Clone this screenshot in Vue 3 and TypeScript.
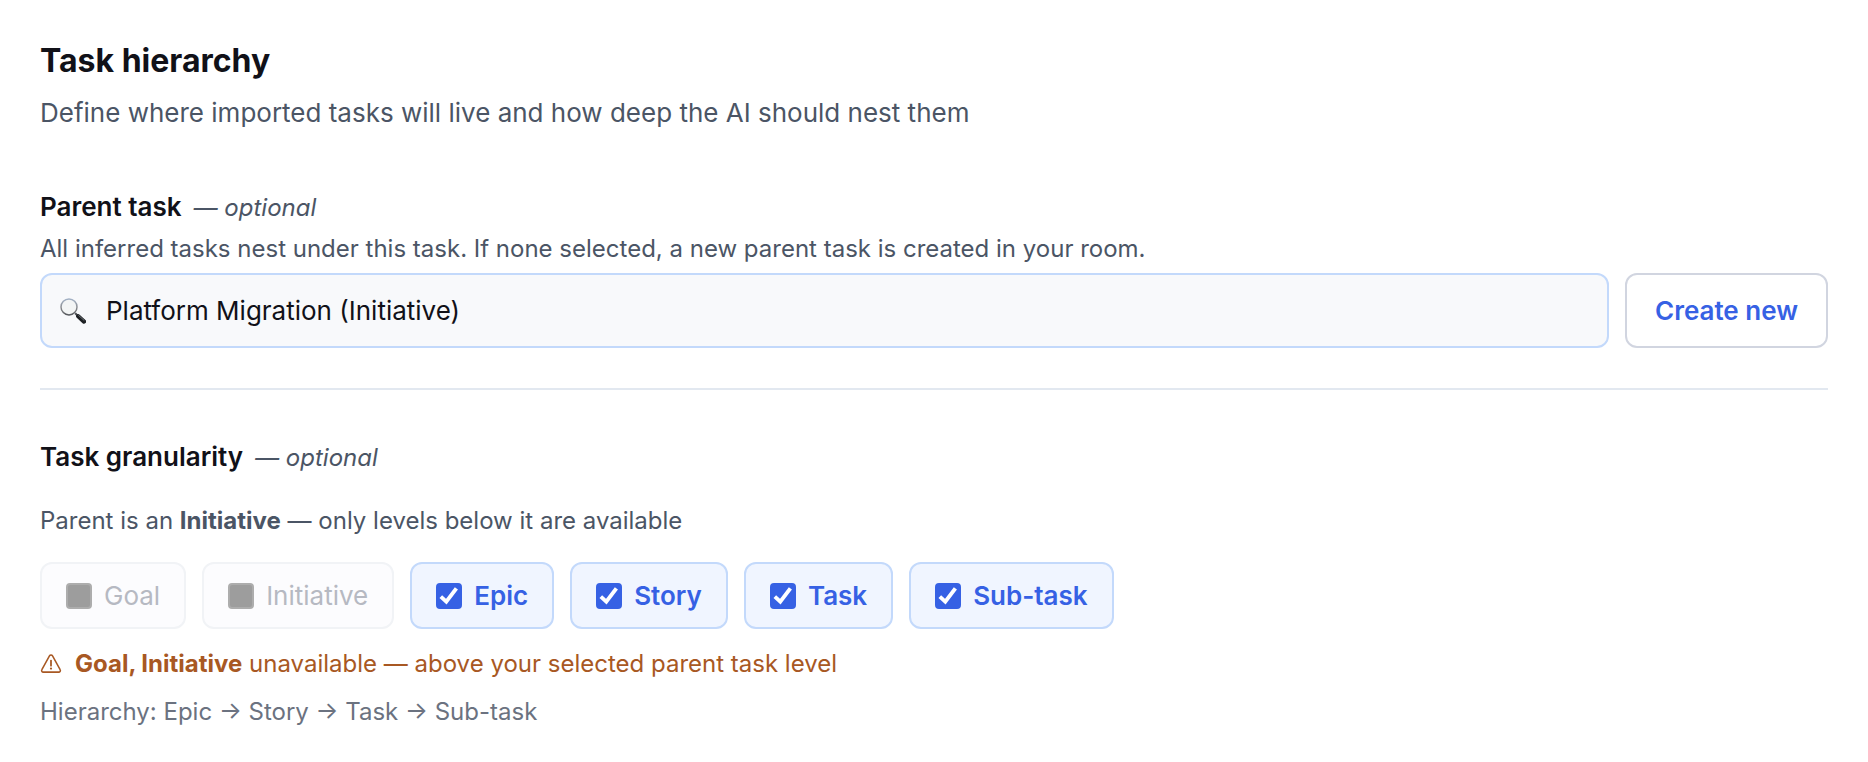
<script setup lang="ts">
import { computed, ref } from 'vue'

interface Level {
  name: string
  checked: boolean
  disabled: boolean
}

const parentTask = ref('Platform Migration (Initiative)')

const levels = ref<Level[]>([
  { name: 'Goal', checked: false, disabled: true },
  { name: 'Initiative', checked: false, disabled: true },
  { name: 'Epic', checked: true, disabled: false },
  { name: 'Story', checked: true, disabled: false },
  { name: 'Task', checked: true, disabled: false },
  { name: 'Sub-task', checked: true, disabled: false },
])

const unavailable = computed(() =>
  levels.value.filter((l) => l.disabled).map((l) => l.name).join(', '),
)
const hierarchy = computed(() =>
  levels.value.filter((l) => l.checked).map((l) => l.name).join(' → '),
)
</script>

<template>
  <main class="panel">
    <h1 class="title">Task hierarchy</h1>
    <p class="subtitle">Define where imported tasks will live and how deep the AI should nest them</p>

    <section class="parent">
      <h2 class="heading">
        <label for="parent-task">Parent task</label>
        <span class="optional">— optional</span>
      </h2>
      <p id="parent-hint" class="hint">
        All inferred tasks nest under this task. If none selected, a new parent task is created in your room.
      </p>
      <div class="row">
        <div class="search">
          <svg class="lens" viewBox="0 0 26 26" aria-hidden="true">
            <defs>
              <linearGradient id="lens-rim" x1="0" y1="0" x2="0" y2="1">
                <stop offset="0" stop-color="#a3b2c6" />
                <stop offset="0.55" stop-color="#8b8d90" />
                <stop offset="1" stop-color="#55585c" />
              </linearGradient>
            </defs>
            <path d="M15.2 15.2 18 18" stroke="#4b4e52" stroke-width="2" />
            <path d="M18.2 18.2 24 23.6" stroke="#1d2023" stroke-width="4.2" stroke-linecap="round" />
            <path d="M18.6 17.4 24 22.3" stroke="#70757a" stroke-width="1" stroke-linecap="round" />
            <circle cx="9" cy="8.9" r="8" fill="#f3f5f5" stroke="url(#lens-rim)" stroke-width="1.5" />
          </svg>
          <input id="parent-task" v-model="parentTask" class="search-input" type="text" aria-describedby="parent-hint" />
        </div>
        <button class="create" type="button">Create new</button>
      </div>
    </section>

    <section class="granularity">
      <h2 class="heading">
        <span>Task granularity</span>
        <span class="optional">— optional</span>
      </h2>
      <p class="hint level-hint">Parent is an <strong>Initiative</strong> — only levels below it are available</p>
      <div class="chips">
        <label
          v-for="level in levels"
          :key="level.name"
          class="chip"
          :class="{ active: level.checked, disabled: level.disabled }"
        >
          <span class="check">
            <input v-model="level.checked" class="box" type="checkbox" :disabled="level.disabled" />
            <svg v-if="level.checked" class="tick" viewBox="0 0 26 26" aria-hidden="true">
              <path d="M4.8 13.6 10.3 18.6 20.4 5.4" fill="none" stroke="#fff" stroke-width="3.9" />
            </svg>
          </span>
          <span>{{ level.name }}</span>
        </label>
      </div>
      <p class="warning">
        <svg class="alert" viewBox="0 0 20 20" aria-hidden="true">
          <path
            d="M8.6 2.7a1.6 1.6 0 0 1 2.8 0l6.9 12.4a1.5 1.5 0 0 1-1.3 2.3H3a1.5 1.5 0 0 1-1.3-2.3z"
            fill="none"
            stroke="currentColor"
            stroke-width="1.4"
            stroke-linejoin="round"
          />
          <path d="M10 6.9v4.6" stroke="currentColor" stroke-width="1.6" stroke-linecap="round" />
          <circle cx="10" cy="14.2" r="1" fill="currentColor" />
        </svg>
        <span><strong>{{ unavailable }}</strong> unavailable — above your selected parent task level</span>
      </p>
      <p class="path">Hierarchy: {{ hierarchy }}</p>
    </section>
  </main>
</template>

<style>
body {
  background: #fff;
}
</style>

<style scoped>
.panel {
  padding: 40px;
  font-family: Inter, 'Liberation Sans', sans-serif;
  color: #111118;
}
.title,
.subtitle,
.heading,
.hint,
.warning,
.path {
  margin: 0;
}
.title {
  font-size: 32px;
  line-height: 41px;
  font-weight: 700;
}
.subtitle {
  margin-top: 16px;
  font-size: 26px;
  line-height: 32px;
  color: #4b5565;
}
.parent {
  margin-top: 62px;
  padding-bottom: 40px;
  border-bottom: 2px solid #e2e8f0;
}
.heading {
  display: flex;
  align-items: baseline;
  gap: 12px;
  font-size: 26px;
  line-height: 32px;
  font-weight: 600;
}
.optional {
  font-size: 24px;
  font-weight: 400;
  font-style: italic;
  color: #4b5565;
}
.hint {
  margin-top: 10px;
  font-size: 24px;
  line-height: 30px;
  color: #4b5565;
}
.row {
  display: flex;
  gap: 16px;
  margin-top: 9px;
}
.search {
  flex: 1;
  min-width: 0;
  box-sizing: border-box;
  display: flex;
  align-items: center;
  gap: 20px;
  padding: 0 18px;
  border: 2px solid #c3d9fb;
  border-radius: 12px;
  background: #f8f9fb;
}
.lens {
  flex: none;
  width: 26px;
  height: 26px;
}
.search-input {
  flex: 1;
  min-width: 0;
  padding: 0;
  border: 0;
  outline: 0;
  background: transparent;
  font: inherit;
  font-size: 26px;
  line-height: 32px;
  color: inherit;
}
.create {
  padding: 20px 28px 19px;
  border: 2px solid #d1d5e0;
  border-radius: 12px;
  background: #fff;
  font: inherit;
  font-size: 26px;
  line-height: 32px;
  font-weight: 600;
  color: #3661e4;
  cursor: pointer;
}
.granularity {
  margin-top: 51px;
}
.level-hint {
  margin-top: 32px;
}
.chips {
  display: flex;
  flex-wrap: wrap;
  gap: 16px;
  margin-top: 26px;
}
.chip {
  display: flex;
  align-items: center;
  gap: 12px;
  padding: 16px 24px;
  border: 2px solid #e2e8f0;
  border-radius: 12px;
  background: #f8f9fb;
  font-size: 26px;
  line-height: 31px;
}
.chip.active {
  border-color: #c3d9fb;
  background: #f0f5ff;
  font-weight: 600;
  color: #3661e4;
}
.chip.disabled {
  border-color: #f1f3f6;
  background: #fcfcfe;
  color: #b6b9c2;
}
.check {
  position: relative;
  flex: none;
  width: 26px;
  height: 26px;
}
.box {
  appearance: none;
  display: block;
  box-sizing: border-box;
  width: 26px;
  height: 26px;
  margin: 0;
  border-radius: 4px;
  background: #fff;
  border: 2px solid #767676;
}
.box:checked {
  border-color: #3661e4;
  background: #3661e4;
}
.box:disabled {
  border-color: #adadad;
  background: #9d9d9d;
}
.tick {
  position: absolute;
  inset: 0;
  pointer-events: none;
}
.warning {
  display: flex;
  align-items: center;
  gap: 13px;
  margin-top: 20px;
  font-size: 24px;
  line-height: 30px;
  color: #a85823;
}
.alert {
  flex: none;
  width: 22px;
  height: 22px;
}
.path {
  margin-top: 18px;
  font-size: 24px;
  line-height: 30px;
  color: #6b7280;
}
</style>
